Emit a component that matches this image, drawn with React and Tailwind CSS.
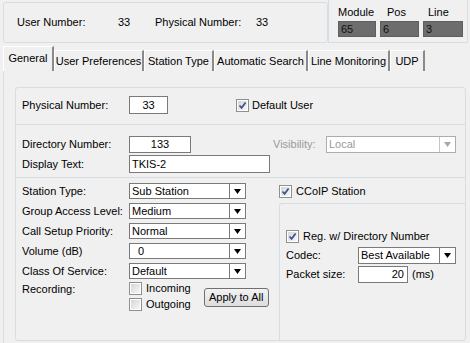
import React from 'react';

const TABS = [
  { label: 'User Preferences', w: 'w-[90px]' },
  { label: 'Station Type', w: 'w-[70px]' },
  { label: 'Automatic Search', w: 'w-[94px]' },
  { label: 'Line Monitoring', w: 'w-[82px]' },
  { label: 'UDP', w: 'w-[35px]' },
];

const ROWS = [
  { label: 'Station Type:', value: 'Sub Station' },
  { label: 'Group Access Level:', value: 'Medium' },
  { label: 'Call Setup Priority:', value: 'Normal' },
  { label: 'Volume (dB)', value: '  0' },
  { label: 'Class Of Service:', value: 'Default' },
];

function Check({ checked }) {
  return (
    <span className="w-[13px] h-[13px] shrink-0 border border-[#8e8f8f] bg-white p-[1px] flex">
      <span className="flex-1 bg-gradient-to-br from-[#d6d6d6] to-[#f7f7f7] flex items-center justify-center">
        {checked && (
          <svg width="9" height="9" viewBox="0 0 9 9">
            <path d="M1.5 4.5 L3.6 6.8 L7.6 1.5" fill="none" stroke="#3b4f93" strokeWidth="1.7" />
          </svg>
        )}
      </span>
    </span>
  );
}

function Arrow({ disabled }) {
  return (
    <span
      className={
        'w-[16px] h-full border-l flex items-center justify-center ' +
        (disabled ? 'border-[#c4c4c4]' : 'border-[#7a7a7a]')
      }
    >
      <svg width="7" height="5" viewBox="0 0 7 5">
        <polygon points="0,0 7,0 3.5,5" fill={disabled ? '#a8a8a8' : '#000'} />
      </svg>
    </span>
  );
}

function Select({ value, w, h = 'h-[16px]', disabled }) {
  return (
    <div
      className={
        w + ' ' + h + ' border bg-white flex items-stretch ' +
        (disabled ? 'border-[#adadad] bg-[#f4f4f4] text-[#9a9a9a]' : 'border-[#7a7a7a]')
      }
    >
      <span className="flex-1 pl-[2px] flex items-center whitespace-pre">{value}</span>
      <Arrow disabled={disabled} />
    </div>
  );
}

export default function App() {
  return (
    <div className="w-[470px] h-[343px] bg-[#f0f0f0] overflow-hidden text-[11px] leading-none text-black font-['Liberation_Sans',Arial,sans-serif] flex flex-col">
      {/* header info */}
      <div className="flex h-[46px] shrink-0">
        <div className="ml-[3px] mt-[2px] w-[325px] h-[41px] border border-[#d6dde3] rounded-[3px] flex items-center">
          <span className="ml-[13px] w-[101px]">User Number:</span>
          <span className="w-[37px]">33</span>
          <span className="w-[101px]">Physical Number:</span>
          <span>33</span>
        </div>
        <div className="w-[140px] h-[43px] border-l border-b border-r border-[#d6dde3] pl-[9px] pt-[6px]">
          <div className="flex h-[13px] items-center">
            <span className="w-[42px]">Module</span>
            <span className="w-[42px] pl-[7px]">Pos</span>
            <span className="pl-[6px]">Line</span>
          </div>
          <div className="flex gap-[4px] mt-[2px] text-[#111]">
            <span className="w-[38px] h-[16px] bg-[#6d6d6d] border border-[#5f5f5f] pl-[2px] flex items-center">65</span>
            <span className="w-[39px] h-[16px] bg-[#6d6d6d] border border-[#5f5f5f] pl-[2px] flex items-center">6</span>
            <span className="w-[40px] h-[16px] bg-[#6d6d6d] border border-[#5f5f5f] pl-[2px] flex items-center">3</span>
          </div>
        </div>
      </div>

      {/* tabs */}
      <div className="flex items-end h-[25px] pl-[3px] shrink-0">
        <div className="w-[51px] h-[25px] border-l border-t border-white border-r-2 border-r-[#8a8a8a] flex items-center justify-center pb-[2px]">
          General
        </div>
        {TABS.map((t) => (
          <div
            key={t.label}
            className={t.w + ' h-[21px] border-l border-t border-white border-r-2 border-r-[#8a8a8a] flex items-center justify-center'}
          >
            {t.label}
          </div>
        ))}
      </div>

      {/* tab page */}
      <div className="flex-1 ml-[3px] border-l border-[#dcdcdc] pl-[11px] pt-[16px]">
        <div className="w-[451px] h-[254px] border border-[#d6dde3] rounded-[3px] flex flex-col">
          {/* physical number */}
          <div className="h-[37px] border-b border-[#d6dde3] pl-[6px] pt-[8px] flex items-start">
            <div className="flex items-center h-[18px]">
              <span className="w-[107px]">Physical Number:</span>
              <span className="w-[39px] h-[18px] border border-[#7a7a7a] bg-white flex items-center justify-center">33</span>
              <span className="ml-[68px] flex items-center gap-[3px]">
                <Check checked />
                <span>Default User</span>
              </span>
            </div>
          </div>

          {/* directory / display */}
          <div className="h-[53px] border-b border-[#d6dde3] pl-[6px] pt-[11px]">
            <div className="flex items-center h-[17px]">
              <span className="w-[107px]">Directory Number:</span>
              <span className="w-[62px] h-[17px] border border-[#7a7a7a] bg-white flex items-center justify-center">133</span>
              <span className="ml-[82px] w-[53px] text-[#9a9a9a]">Visibility:</span>
              <Select value="Local" w="w-[130px]" h="h-[17px]" disabled />
            </div>
            <div className="flex items-center h-[18px] mt-[2px]">
              <span className="w-[107px]">Display Text:</span>
              <span className="w-[141px] h-[18px] border border-[#7a7a7a] bg-white flex items-center pl-[2px]">TKIS-2</span>
            </div>
          </div>

          {/* station settings */}
          <div className="flex-1 flex">
            <div className="w-[263px] pl-[6px] pt-[5px]">
              <div className="flex flex-col gap-[4px]">
                {ROWS.map((r) => (
                  <div key={r.label} className="flex items-center h-[16px]">
                    <span className="w-[107px]">{r.label}</span>
                    <Select value={r.value} w="w-[117px]" />
                  </div>
                ))}
              </div>
              <div className="flex mt-[3px]">
                <span className="w-[107px] pt-[2px]">Recording:</span>
                <div className="flex flex-col gap-[3px]">
                  <span className="flex items-center gap-[4px] h-[13px]">
                    <Check />
                    <span>Incoming</span>
                  </span>
                  <span className="flex items-center gap-[4px] h-[13px]">
                    <Check />
                    <span>Outgoing</span>
                  </span>
                </div>
                <button
                  type="button"
                  className="ml-[13px] mt-[6px] w-[65px] h-[19px] border border-[#707070] rounded-[3px] bg-gradient-to-b from-[#f2f2f2] to-[#dddddd] flex items-center justify-center"
                >
                  Apply to All
                </button>
              </div>
            </div>

            <div className="flex-1 flex flex-col">
              <div className="h-[25px] pt-[7px] flex items-start gap-[4px]">
                <Check checked />
                <span className="pt-[1px]">CCoIP Station</span>
              </div>
              <div className="flex-1 border-l border-t border-[#d6dde3] rounded-tl-[3px] pl-[6px] pt-[26px]">
                <div className="flex items-center gap-[4px] h-[13px]">
                  <Check checked />
                  <span>Reg. w/ Directory Number</span>
                </div>
                <div className="flex items-center mt-[4px] h-[17px]">
                  <span className="w-[72px]">Codec:</span>
                  <Select value="Best Available" w="w-[98px]" h="h-[17px]" />
                </div>
                <div className="flex items-center mt-[2px] h-[17px]">
                  <span className="w-[72px]">Packet size:</span>
                  <span className="w-[50px] h-[17px] border border-[#7a7a7a] bg-white flex items-center justify-end pr-[3px]">20</span>
                  <span className="ml-[4px]">(ms)</span>
                </div>
              </div>
            </div>
          </div>
        </div>
      </div>
    </div>
  );
}
